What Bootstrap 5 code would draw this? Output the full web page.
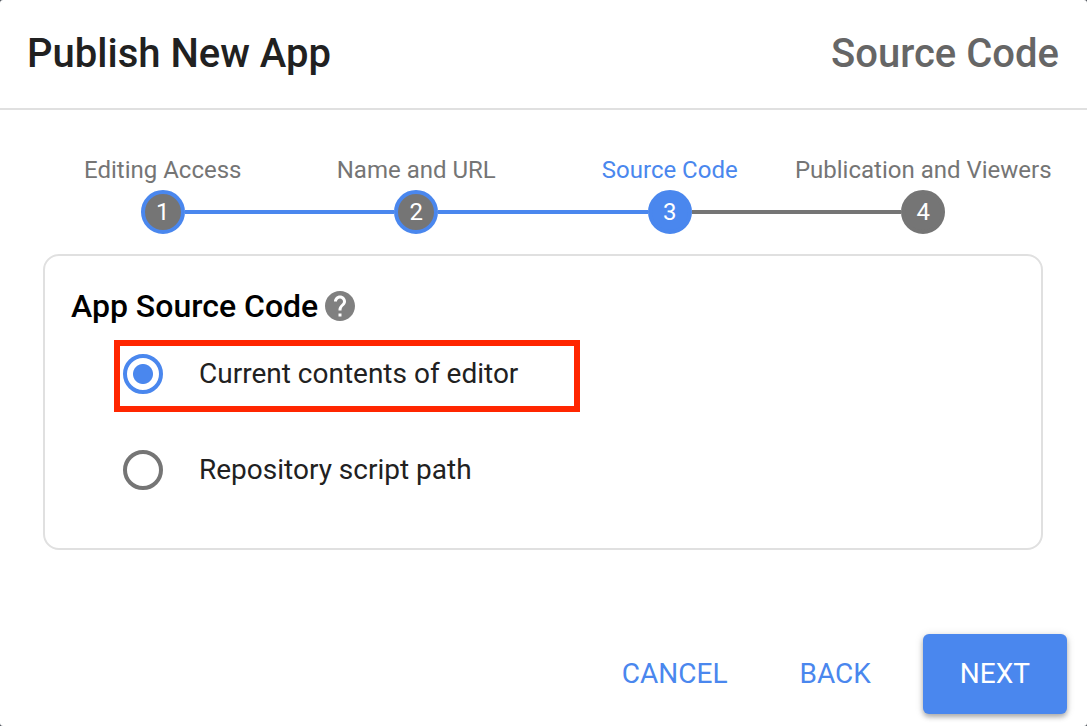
<!DOCTYPE html>
<html lang="en">
<head>
<meta charset="utf-8">
<meta name="viewport" content="width=device-width, initial-scale=1">
<title>Publish New App</title>
<link href="https://cdn.jsdelivr.net/npm/bootstrap@5.3.0/dist/css/bootstrap.min.css" rel="stylesheet">
<style>
  :root { --accent: #4a87ee; --muted: #757575; --line: #e0e0e0; }
  html { background: #4a5058; }
  body { font-family: Roboto, sans-serif; color: #212121; background: transparent; }
  .dialog { background: #fff; border-radius: 3px; }
  .dialog-head { padding: 24px 28px 24px 27px; border-bottom: 2px solid var(--line); }
  .dialog-head h1, .dialog-head h2 { font-size: 40px; line-height: 60px; font-weight: 500; }
  .dialog-head h2 { color: #666; }
  .stepper { padding: 44px 37px 20px 36px; }
  .step { flex: 1 1 0; width: 0; color: var(--muted); font-size: 24px; }
  .step-label { line-height: 32px; padding-bottom: 4px; white-space: nowrap; }
  .step-dot { width: 44px; height: 44px; line-height: 36px; border: 4px solid var(--muted); background: var(--muted); color: #fff; }
  .step-line { height: 4px; background: var(--muted); }
  .blue-line { background: var(--accent); }
  .step-done .step-dot { border-color: var(--accent); }
  .step-current { color: var(--accent); }
  .step-current .step-dot { background: var(--accent); border-color: var(--accent); }
  .panel { margin: 0 44px 0 43px; padding: 26px; border: 2px solid var(--line); border-radius: 16px; }
  .panel-title { font-size: 32px; line-height: 48px; font-weight: 500; color: #000; }
  .options { padding: 24px 0 32px 52px; gap: 56px; }
  .option { gap: 36px; font-size: 28px; line-height: 40px; }
  .option .form-check-input { width: 40px; height: 40px; border: 4px solid var(--muted); }
  .option .form-check-input:checked { border-color: var(--accent); background: #fff radial-gradient(circle, var(--accent) 9.5px, #fff 10.5px) border-box; }
  .callout { position: absolute; inset: -14px -62px -18px -9px; border: 6px solid #ff2600; pointer-events: none; }
  .actions { padding: 0 20px 12px; }
  .actions .btn { height: 80px; font-size: 28px; border: 0; border-radius: 6px; color: var(--accent); padding: 0 36px; }
  .actions .btn-next { background: var(--accent); color: #fff; padding: 0 37px; box-shadow: 0 3px 5px rgba(0,0,0,.28), 0 1px 10px rgba(0,0,0,.12); }
</style>
</head>
<body>
<main class="dialog d-flex flex-column min-vh-100">
  <header class="dialog-head d-flex justify-content-between align-items-center">
    <h1 class="m-0">Publish New App</h1>
    <h2 class="m-0">Source Code</h2>
  </header>

  <ol class="stepper list-unstyled d-flex m-0">
    <li class="step step-done d-flex flex-column align-items-center">
      <span class="step-label">Editing Access</span>
      <div class="d-flex align-items-center w-100">
        <span class="flex-fill"></span>
        <span class="step-dot rounded-circle text-center">1</span>
        <span class="step-line blue-line flex-fill"></span>
      </div>
    </li>
    <li class="step step-done d-flex flex-column align-items-center">
      <span class="step-label">Name and URL</span>
      <div class="d-flex align-items-center w-100">
        <span class="step-line blue-line flex-fill"></span>
        <span class="step-dot rounded-circle text-center">2</span>
        <span class="step-line blue-line flex-fill"></span>
      </div>
    </li>
    <li class="step step-current d-flex flex-column align-items-center" aria-current="step">
      <span class="step-label">Source Code</span>
      <div class="d-flex align-items-center w-100">
        <span class="step-line blue-line flex-fill"></span>
        <span class="step-dot rounded-circle text-center">3</span>
        <span class="step-line flex-fill"></span>
      </div>
    </li>
    <li class="step d-flex flex-column align-items-center">
      <span class="step-label">Publication and Viewers</span>
      <div class="d-flex align-items-center w-100">
        <span class="step-line flex-fill"></span>
        <span class="step-dot rounded-circle text-center">4</span>
        <span class="flex-fill"></span>
      </div>
    </li>
  </ol>

  <section class="panel" aria-labelledby="panel-title">
    <div class="d-flex align-items-center gap-1">
      <h3 class="panel-title m-0" id="panel-title">App Source Code</h3>
      <svg width="36" height="36" viewBox="0 0 24 24" fill="#808080" role="img" aria-label="Help"><path d="M12 2C6.480 2 2 6.480 2 12s4.480 10 10 10 10-4.480 10-10S17.520 2 12 2zm1 17h-2v-2h2v2zm2.070-7.750l-.9.920C13.450 12.900 13 13.500 13 15h-2v-.5c0-1.100.45-2.100 1.170-2.830l1.240-1.260c.37-.36.590-.86.590-1.410 0-1.100-.9-2-2-2s-2 .9-2 2H8c0-2.210 1.790-4 4-4s4 1.790 4 4c0 .88-.36 1.680-.93 2.250z"/></svg>
    </div>
    <div class="options d-flex flex-column align-items-start" role="radiogroup" aria-labelledby="panel-title">
      <div class="option d-flex position-relative">
        <input class="form-check-input m-0" type="radio" name="source" id="source-editor" checked>
        <label for="source-editor">Current contents of editor</label>
        <span class="callout"></span>
      </div>
      <div class="option d-flex">
        <input class="form-check-input m-0" type="radio" name="source" id="source-repo">
        <label for="source-repo">Repository script path</label>
      </div>
    </div>
  </section>

  <footer class="actions d-flex justify-content-end mt-auto">
    <button type="button" class="btn">CANCEL</button>
    <button type="button" class="btn">BACK</button>
    <button type="button" class="btn btn-next ms-3">NEXT</button>
  </footer>
</main>
<script src="https://cdn.jsdelivr.net/npm/bootstrap@5.3.0/dist/js/bootstrap.bundle.min.js"></script>
</body>
</html>
